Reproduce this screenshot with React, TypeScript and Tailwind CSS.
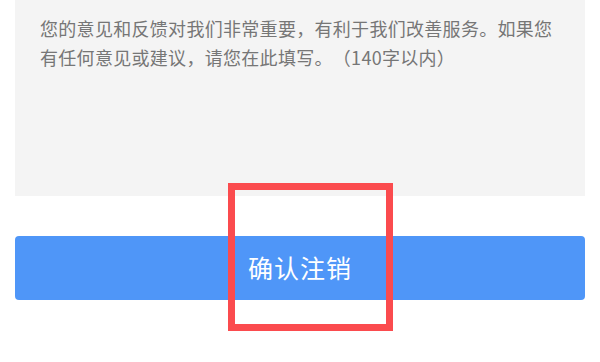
import React from "react";

export default function App() {
  return (
    <div
      className="relative w-[600px] h-[362px] bg-white overflow-hidden"
      style={{ fontFamily: '"Noto Sans CJK SC", "Noto Sans", sans-serif' }}
    >
      {/* Feedback textarea */}
      <div className="mx-[15px] h-[196px] bg-[#f4f4f4] pl-[25px] pr-[20px] pt-[14px]">
        <p className="text-[18px] leading-[29px] tracking-[0.3px] text-[#767676] [text-spacing-trim:space-all]">
          您的意见和反馈对我们非常重要，有利于我们改善服务。如果您
          <br />
          有任何意见或建议，请您在此填写。（140字以内）
        </p>
      </div>

      {/* Confirm button */}
      <div className="px-[15px] mt-[40px]">
        <button className="w-full h-[64px] rounded-[4px] bg-[#4f96f8] text-white text-[25px] tracking-[1px] flex items-center justify-center">
          确认注销
        </button>
      </div>

      {/* Annotation box */}
      <div className="absolute left-[228px] top-[183px] w-[165px] h-[148px] border-[7px] border-[#fb4b4e]" />
    </div>
  );
}
